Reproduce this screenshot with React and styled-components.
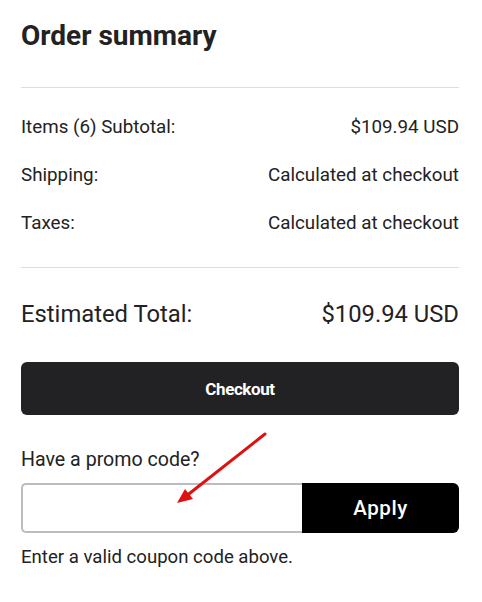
import React from "react";
import styled, { createGlobalStyle } from "styled-components";

const GlobalStyle = createGlobalStyle`
  html, body {
    margin: 0;
    padding: 0;
    background: #fff;
    font-family: Roboto, "Liberation Sans", sans-serif;
    color: #222;
  }
`;

const rows = [
  { label: "Items (6) Subtotal:", value: "$109.94 USD" },
  { label: "Shipping:", value: "Calculated at checkout" },
  { label: "Taxes:", value: "Calculated at checkout" },
];

export default function App() {
  return (
    <>
      <GlobalStyle />
      <Summary>
        <Title>Order summary</Title>
        <Divider />
        <Rows>
          {rows.map((r) => (
            <Row key={r.label}>
              <span>{r.label}</span>
              <span>{r.value}</span>
            </Row>
          ))}
        </Rows>
        <Divider />
        <TotalRow>
          <span>Estimated Total:</span>
          <span>$109.94 USD</span>
        </TotalRow>
        <CheckoutButton>Checkout</CheckoutButton>
        <Promo>
          <PromoLabel>Have a promo code?</PromoLabel>
          <PromoForm>
            <PromoInput type="text" />
            <ApplyButton>Apply</ApplyButton>
          </PromoForm>
          <Hint>Enter a valid coupon code above.</Hint>
          <Arrow width="100" height="80" viewBox="0 0 100 80">
            <line x1="92" y1="3" x2="12" y2="66" stroke="#e01010" strokeWidth="3" strokeLinecap="round" />
            <polygon points="4,72 12,58 20,68" fill="#e01010" />
          </Arrow>
        </Promo>
      </Summary>
    </>
  );
}

const Summary = styled.div`
  width: 438px;
  padding: 19px 23px 40px 21px;
  display: flex;
  flex-direction: column;
`;

const Title = styled.h2`
  margin: 0;
  font-size: 28px;
  font-weight: 700;
  line-height: 34px;
  color: #222;
`;

const Divider = styled.hr`
  margin: 0;
  border: none;
  border-top: 1px solid #dedede;
  &:first-of-type {
    margin-top: 34px;
  }
`;

const Rows = styled.div`
  display: flex;
  flex-direction: column;
  gap: 26px;
  padding: 28px 0 33px;
`;

const Row = styled.div`
  display: flex;
  justify-content: space-between;
  font-size: 18.8px;
  line-height: 22px;
  color: #222;
`;

const TotalRow = styled.div`
  display: flex;
  justify-content: space-between;
  font-size: 23.8px;
  line-height: 28px;
  padding: 32px 0 0;
  color: #222;
`;

const CheckoutButton = styled.button`
  margin-top: 34px;
  height: 53px;
  border: none;
  border-radius: 6px;
  background: #222225;
  color: #fff;
  font-family: Roboto, "Liberation Sans", sans-serif;
  font-size: 17px;
  font-weight: 700;
  letter-spacing: -0.4px;
  cursor: pointer;
`;

const Promo = styled.div`
  position: relative;
  margin-top: 34px;
  display: flex;
  flex-direction: column;
`;

const PromoLabel = styled.div`
  font-size: 19.6px;
  line-height: 22px;
  color: #222;
`;

const PromoForm = styled.div`
  display: flex;
  margin-top: 12px;
  height: 50px;
`;

const PromoInput = styled.input`
  width: 281px;
  box-sizing: border-box;
  border: 2px solid #bdbdbd;
  border-right: none;
  border-radius: 5px 0 0 5px;
  outline: none;
  font-size: 16px;
  padding: 0 12px;
`;

const ApplyButton = styled.button`
  flex: 1;
  border: none;
  border-radius: 0 6px 6px 0;
  background: #000;
  color: #fff;
  font-family: Roboto, "Liberation Sans", sans-serif;
  font-size: 20.5px;
  font-weight: 500;
  letter-spacing: 0.6px;
  cursor: pointer;
`;

const Hint = styled.div`
  margin-top: 13px;
  font-size: 18.6px;
  line-height: 22px;
  color: #222;
`;

const Arrow = styled.svg`
  position: absolute;
  left: 152px;
  top: -18px;
  pointer-events: none;
`;
